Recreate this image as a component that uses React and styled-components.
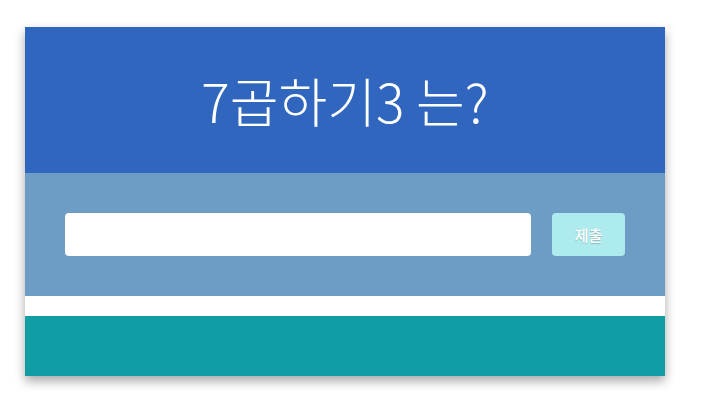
import styled, { createGlobalStyle } from "styled-components";

const GlobalStyle = createGlobalStyle`
  body {
    margin: 0;
    background: #ffffff;
    font-family: "Noto Sans CJK KR", "Noto Sans", sans-serif;
  }
`;

const Page = styled.div`
  padding: 27px 25px 40px 25px;
  width: 640px;
`;

const Card = styled.div`
  display: flex;
  flex-direction: column;
  background: #ffffff;
  box-shadow: 0 5px 10px rgba(0, 0, 0, 0.35);
`;

const Header = styled.div`
  height: 146px;
  background: #3066be;
  display: flex;
  align-items: center;
  justify-content: center;
`;

const Title = styled.h1`
  margin: 0;
  color: #ffffff;
  font-size: 53px;
  font-weight: 300;
  line-height: 1;
`;

const Form = styled.form`
  display: flex;
  gap: 21px;
  padding: 40px;
  background: #6d9dc5;
`;

const Input = styled.input`
  flex: 1;
  height: 43px;
  box-sizing: border-box;
  border: none;
  border-radius: 4px;
  background: #ffffff;
  outline: none;
`;

const Button = styled.button`
  width: 73px;
  height: 43px;
  border: none;
  border-radius: 4px;
  background: #aeebee;
  color: #ffffff;
  font-family: "Noto Sans CJK KR", sans-serif;
  font-size: 15px;
  font-weight: 500;
  text-shadow: 0 1px 1px rgba(0, 0, 0, 0.2);
`;

const Spacer = styled.div`
  height: 20px;
`;

const Footer = styled.div`
  height: 60px;
  background: #119da4;
`;

export default function App() {
  return (
    <>
      <GlobalStyle />
      <Page>
        <Card>
          <Header>
            <Title>7곱하기3 는?</Title>
          </Header>
          <Form onSubmit={(e) => e.preventDefault()}>
            <Input type="text" />
            <Button type="submit">제출</Button>
          </Form>
          <Spacer />
          <Footer />
        </Card>
      </Page>
    </>
  );
}
